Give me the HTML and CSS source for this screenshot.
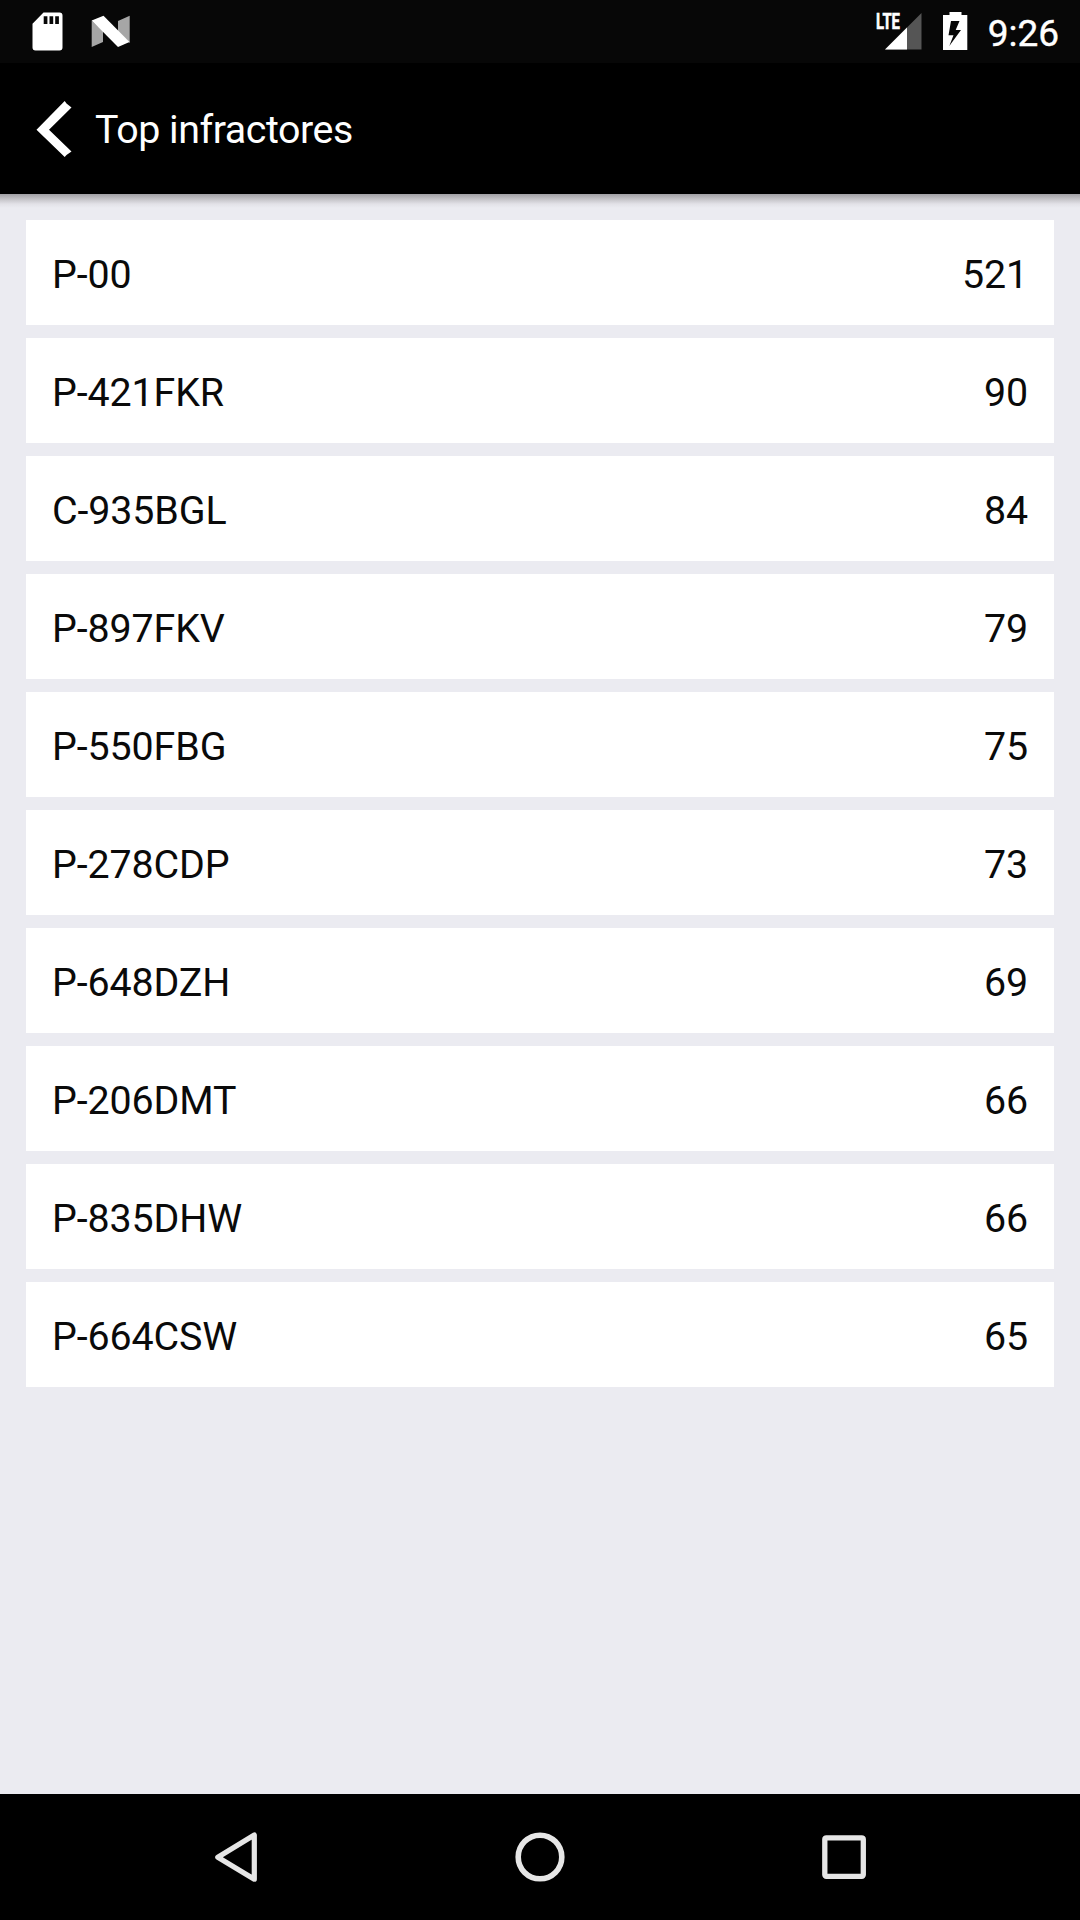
FILE: index.html
```html
<!DOCTYPE html>
<html lang="es">
<head>
<meta charset="utf-8">
<title>Top infractores</title>
<link rel="stylesheet" href="styles.css">
</head>
<body>
<div class="screen">
  <div class="status">
    <svg class="notices" width="140" height="63" viewBox="0 0 140 63">
      <path fill="#fff" fill-rule="evenodd" d="M43.5 12.5H59.5a3 3 0 0 1 3 3V47.5a3 3 0 0 1-3 3H35.500a3 3 0 0 1-3-3V23.700ZM43.700 16.300v7.700h3.700v-7.700ZM49.500 16.300v7.700h3.700v-7.700ZM55.200 16.300v7.700h3.700v-7.700Z"/>
      <path fill="#a6a6a6" d="M91.700 20.500 103 31V42L91.700 47ZM129.700 15.700 118 21V32L129.700 43Z"/>
      <path fill="#fff" d="M91.700 20.500 103.500 15.700 129.500 42 118 47Z"/>
    </svg>
    <div class="indicators">
      <svg width="50" height="63" viewBox="875 0 50 63">
        <path fill="#555" d="M885 49.500 921.500 13V49.500Z"/>
        <path fill="#fff" d="M885 49.500 907 27.500V49.500Z"/>
        <path fill="#070707" d="M875 12H901V31H875Z"/>
        <text class="lte" x="876" y="29" textLength="24" lengthAdjust="spacingAndGlyphs">LTE</text>
      </svg>
      <svg width="26" height="63" viewBox="942 0 26 63">
        <path fill="#fff" fill-rule="evenodd" d="M949.500 12H961.500V15H967.300V50H943V15H949.500ZM951 21 948.500 35.300H953.500L949.300 46 961 30H955.700L959.500 21Z"/>
      </svg>
      <span class="clock">9:26</span>
    </div>
  </div>
  <header class="toolbar">
    <svg width="40" height="60" viewBox="35 98 40 60">
      <path fill="#fff" d="M36.500 128.700 64.700 100 66.500 102.500 71.500 106.500 49 128.700 71.500 150.500 66.500 154 64.700 156Z"/>
    </svg>
    <h1 class="title">Top infractores</h1>
  </header>
  <main class="list">
    <div class="row"><span>P-00</span><span>521</span></div>
    <div class="row"><span>P-421FKR</span><span>90</span></div>
    <div class="row"><span>C-935BGL</span><span>84</span></div>
    <div class="row"><span>P-897FKV</span><span>79</span></div>
    <div class="row"><span>P-550FBG</span><span>75</span></div>
    <div class="row"><span>P-278CDP</span><span>73</span></div>
    <div class="row"><span>P-648DZH</span><span>69</span></div>
    <div class="row"><span>P-206DMT</span><span>66</span></div>
    <div class="row"><span>P-835DHW</span><span>66</span></div>
    <div class="row"><span>P-664CSW</span><span>65</span></div>
  </main>
  <nav class="navbar">
    <svg width="1080" height="126" viewBox="0 1794 1080 126" fill="none" stroke="#e6e6e6">
      <path stroke-width="5.200" stroke-linejoin="round" d="M217.800 1857.200 254.300 1835V1879.200Z"/>
      <circle cx="540" cy="1857" r="21.800" stroke-width="5.600"/>
      <rect x="824.800" y="1837.800" width="38.500" height="38.500" rx="1.500" stroke-width="5.300"/>
    </svg>
  </nav>
</div>
</body>
</html>
```
FILE: styles.css
```css
* { box-sizing: border-box; }

body {
  margin: 0;
  font-family: Roboto, sans-serif;
}

svg { display: block; flex: none; }

.screen {
  display: flex;
  flex-direction: column;
  width: 1080px;
  height: 1920px;
  background: #ebebf1;
}

.status {
  display: flex;
  justify-content: space-between;
  height: 63px;
  background: #070707;
  color: #fff;
}

.indicators {
  display: flex;
  gap: 17px;
  padding-right: 21px;
}

.clock {
  width: 73px;
  margin-left: 1px;
  font-size: 37px;
  line-height: 63px;
  padding-top: 2px;
  text-align: right;
  -webkit-text-stroke: 0.4px #fff;
}

.lte {
  fill: #fff;
  stroke: #fff;
  stroke-width: 0.6px;
  font-size: 21.500px;
  font-weight: 700;
}

.toolbar {
  display: flex;
  align-items: center;
  gap: 20px;
  height: 131px;
  padding-left: 35px;
  background: #000;
  color: #fff;
}

.title {
  margin: 0;
  padding-top: 2px;
  font-size: 39.375px;
  font-weight: 400;
  letter-spacing: -0.450px;
}

.list {
  flex: 1;
  display: flex;
  flex-direction: column;
  gap: 13px;
  padding: 26px;
  background: linear-gradient(#a09fa4, #c3c2c7 5px, #e2e1e7 10px, #ebebf1 14px);
}

.row {
  display: flex;
  justify-content: space-between;
  height: 105px;
  padding: 2px 26px 0;
  background: #fff;
  color: #0a0a0a;
  font-size: 39.375px;
  line-height: 105px;
  letter-spacing: -0.100px;
}

.navbar {
  height: 126px;
  background: #000;
}
```
